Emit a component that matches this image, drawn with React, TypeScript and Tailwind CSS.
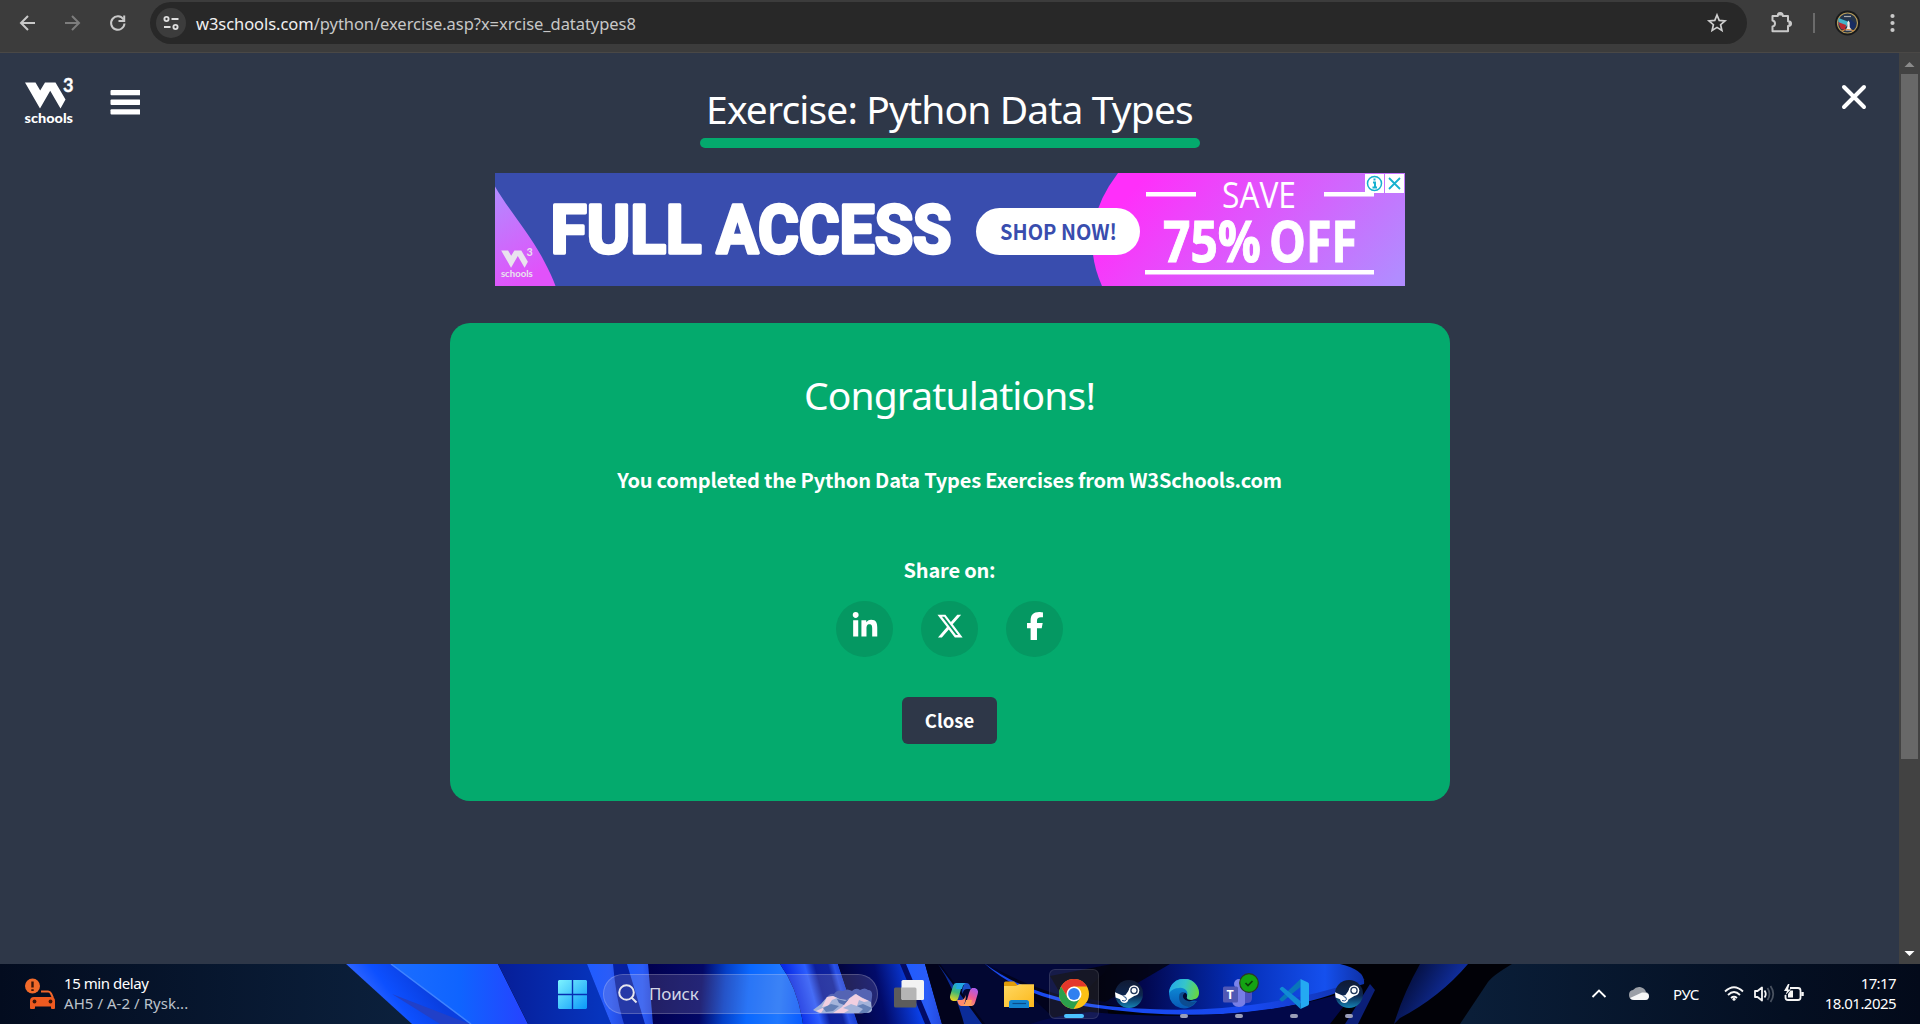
import React from "react";
import { FaLinkedinIn, FaXTwitter, FaFacebookF } from "react-icons/fa6";

function W3Mark({ className, fill = "#fff" }: { className: string; fill?: string }) {
  return (
    <svg className={className} viewBox="0 0 50 48" fill={fill} overflow="visible">
      <path d="M1 5.5H11.5L16.2 13.5L21 5.5H31.5L41.5 22.5L36.5 31.5L26.2 13.8L16 31.5Z" />
      <text x="39" y="14.500" fontFamily="Lato, sans-serif" fontWeight="700" fontSize="18.500" textLength="10.500" lengthAdjust="spacingAndGlyphs" stroke="#fff" strokeWidth="0.400">3</text>
      <text x="0.600" y="46.200" fontFamily="Lato, sans-serif" fontWeight="900" fontSize="13.500" textLength="48.400" lengthAdjust="spacingAndGlyphs">schools</text>
    </svg>
  );
}

function BrowserBar() {
  return (
    <header className="flex h-[53px] shrink-0 items-start border-b border-[#4a4846] bg-[#3c3c3c] pt-0.5">
      <div className="flex h-[42px] w-[150px] shrink-0 items-center">
        <svg className="h-[42px] w-[150px]" viewBox="0 2 150 42" fill="none" strokeWidth="2">
          <path d="M35 23H21.5M28 16L21 23L28 30" stroke="#c9c9c9" />
          <path d="M65 23H78.500M72 16L79 23L72 30" stroke="#7d7d7d" />
          <path d="M123.500 19.500A6.700 6.700 0 1 0 124.500 23.500" stroke="#c9c9c9" />
          <path d="M124.200 15.500V21H118.500" stroke="#c9c9c9" />
        </svg>
      </div>
      <div className="flex h-[42px] w-[1597px] shrink-0 items-center rounded-full bg-[#282828] pr-[19px] pl-1.5">
        <span className="flex size-[30px] items-center justify-center rounded-full bg-[#3c3c3c]">
          <svg className="size-5" viewBox="0 0 20 20" fill="none" stroke="#dedede" strokeWidth="1.900">
            <circle cx="5.500" cy="6" r="2.100" />
            <path d="M10.500 6H17.500M3 14H9.500" />
            <circle cx="14.500" cy="14" r="2.100" />
          </svg>
        </span>
        <span className="ml-2.5 translate-y-px font-['Noto_Sans',sans-serif] text-[16.5px] tracking-[-0.05px] whitespace-nowrap text-[#c7c7c7]">
          <span className="text-[#f0f0f0]">w3schools.com</span>/python/exercise.asp?x=xrcise_datatypes8
        </span>
        <svg className="ml-auto size-[22px]" viewBox="0 0 22 22" fill="none" stroke="#cfcfcf" strokeWidth="1.700">
          <path d="M11 3L13.200 8.400L19 8.900L14.600 12.700L15.900 18.500L11 15.400L6.100 18.500L7.400 12.700L3 8.900L8.800 8.400Z" />
        </svg>
      </div>
      <svg className="h-[42px] w-[173px] shrink-0" viewBox="1747 2 173 42" fill="none">
        <path d="M1772.500 16H1777.800Q1777.800 13 1780.300 13T1782.800 16H1788V21.300Q1791 21.300 1791 23.700T1788 26V31.200H1772.500V26.600Q1775 26.200 1775 23.600T1772.500 20.600Z" stroke="#c9c9c9" strokeWidth="2" strokeLinejoin="round" />
        <path d="M1777.500 15.500Q1777.500 12.500 1780.300 12.500T1783 15.500ZM1788.500 21Q1791.500 21.200 1791.500 23.700T1788.500 26.400Z" fill="#c9c9c9" />
        <path d="M1814 13V33" stroke="#6b6b6b" strokeWidth="2" />
        <circle cx="1847.500" cy="23" r="12.500" fill="#181a1c" />
        <circle cx="1847.500" cy="23" r="10" fill="#25344a" stroke="#b59b5c" strokeWidth="1.200" />
        <path d="M1838.500 18L1849 22L1846 27L1838.500 24Z" fill="#43b2c9" />
        <path d="M1838 22L1846 25L1845 30L1841 29Z" fill="#ba2830" />
        <path d="M1850 19L1856 24L1854 29L1849 28Z" fill="#182c62" />
        <path d="M1844 16.500H1851" stroke="#aaa" strokeWidth="1.200" />
        <path d="M1848.500 20.500L1849.700 22.500V27L1852 30.500H1845.500L1847.300 27V22.500Z" fill="#efe7e5" />
        <path d="M1842 31Q1848 28 1854 31" stroke="#d6873c" strokeWidth="1.200" />
        <g fill="#c9c9c9">
          <circle cx="1892.500" cy="16" r="2.100" />
          <circle cx="1892.500" cy="23" r="2.100" />
          <circle cx="1892.500" cy="30" r="2.100" />
        </g>
      </svg>
    </header>
  );
}

function AdBanner() {
  return (
    <svg className="mt-[25px] h-[113px] w-[910px]" viewBox="0 0 910 113" fill="#fff" overflow="visible">
      <defs>
        <linearGradient id="adLeft" x1="0" y1="0" x2="0.350" y2="1">
          <stop offset="0" stopColor="#b18cff" />
          <stop offset="1" stopColor="#e152fa" />
        </linearGradient>
        <linearGradient id="adRight" gradientUnits="userSpaceOnUse" x1="640" y1="-20" x2="850" y2="165">
          <stop offset="0.080" stopColor="#ff2ffa" />
          <stop offset="1" stopColor="#b18cff" />
        </linearGradient>
      </defs>
      <rect width="910" height="113" fill="#394dae" />
      <path d="M0 13.500C13 36 37 64 49 88Q57 103 60.500 113H0Z" fill="url(#adLeft)" />
      <path d="M623 0Q604 25 599 50Q593 82 607 113H910V0Z" fill="url(#adRight)" />
      <svg x="5.500" y="73" width="33" height="33.500" viewBox="0 0 50 48" fill="#e9e3ee" overflow="visible">
        <path d="M1 5.500H11.500L16.200 13.500L21 5.500H31.500L41.500 22.500L36.500 31.500L26.200 13.800L16 31.500Z" />
        <text x="39.500" y="14.500" fontFamily="Lato, sans-serif" fontWeight="700" fontSize="18.500" textLength="9.500" lengthAdjust="spacingAndGlyphs">3</text>
        <text x="0.600" y="46.200" fontFamily="Lato, sans-serif" fontWeight="700" fontSize="14" textLength="48.400" lengthAdjust="spacingAndGlyphs">schools</text>
      </svg>
      <g fontFamily="Roboto, sans-serif" fontWeight="700" fontSize="67" stroke="#fff" strokeWidth="3.400" strokeLinejoin="round">
        <text x="55.500" y="79.500" textLength="151" lengthAdjust="spacingAndGlyphs">FULL</text>
        <text x="221.500" y="79.500" textLength="235" lengthAdjust="spacingAndGlyphs">ACCESS</text>
      </g>
      <rect x="481" y="35" width="164" height="47" rx="23.500" />
      <text x="505" y="67" fill="#394dae" fontFamily="'Noto Sans CJK SC', sans-serif" fontWeight="700" fontSize="21.500" textLength="117" lengthAdjust="spacingAndGlyphs">SHOP NOW!</text>
      <text x="727" y="34.500" fontFamily="'Open Sans', sans-serif" fontWeight="400" fontSize="37" textLength="74" lengthAdjust="spacingAndGlyphs">SAVE</text>
      <g fontFamily="'Open Sans', sans-serif" fontWeight="700" fontSize="58" stroke="#fff" strokeWidth="1">
        <text x="668" y="88.500" textLength="98" lengthAdjust="spacingAndGlyphs">75%</text>
        <text x="774" y="88.500" textLength="88" lengthAdjust="spacingAndGlyphs">OFF</text>
      </g>
      <path d="M651 19H701V23.500H651ZM829 19H879V23.500H829ZM650 97H879V101.500H650Z" />
      <path d="M870 1H889V20H870ZM890 1H909V20H890Z" />
      <g fill="none" stroke="#16b0cf" strokeWidth="1.500">
        <circle cx="879.500" cy="10.500" r="7" />
        <path d="M894 5L905 16M905 5L894 16" strokeWidth="1.800" />
        <path d="M878 9.500H880V14M877.500 14.500H882M879.500 5.500V7.500" strokeWidth="2" />
      </g>
    </svg>
  );
}

function ShareButton({ children }: { children: React.ReactNode }) {
  return <span className="flex h-14 w-[57px] items-center justify-center rounded-full bg-[#059862] pb-1.5 text-white">{children}</span>;
}

function Page() {
  return (
    <main className="flex h-[911px] shrink-0 bg-[#2e3748]">
      <div className="flex min-w-0 flex-1 flex-col">
        <div className="flex h-[95px] items-start justify-between px-6">
          <div className="flex w-[300px] items-start">
            <W3Mark className="mt-6 h-12 w-[50px]" />
            <svg className="mt-[37px] ml-9 h-[25px] w-[30px]" viewBox="0 0 30 25" fill="#fff">
              <rect x="0.500" width="30" height="5.300" rx="1" />
              <rect x="0.500" y="9.600" width="30" height="5.300" rx="1" />
              <rect x="0.500" y="19.300" width="30" height="5.300" rx="1" />
            </svg>
          </div>
          <div className="flex w-[500px] flex-col items-center">
            <h1 className="mt-7 h-14 font-['Noto_Sans',sans-serif] text-[39px] leading-14 tracking-[-0.87px] whitespace-nowrap text-white">Exercise: Python Data Types</h1>
            <div className="mt-px h-2.5 w-[500px] shrink-0 rounded-[5px] bg-[#04aa6d]" />
          </div>
          <div className="flex w-[300px] justify-end pr-1.5">
            <svg className="mt-[29px] size-[30px]" viewBox="0 0 30 30" stroke="#fff" strokeWidth="4" strokeLinecap="round">
              <path d="M5 5L25 25M25 5L5 25" />
            </svg>
          </div>
        </div>
        <div className="flex flex-col items-center">
          <AdBanner />
          <section className="mt-[37px] flex h-[478px] w-[1000px] flex-col items-center rounded-[20px] bg-[#04aa6d] text-white">
            <h2 className="mt-11 h-14 font-['Noto_Sans',sans-serif] text-[39px] leading-14 tracking-[-0.84px]">Congratulations!</h2>
            <p className="mt-[41px] h-8 font-['Noto_Sans_CJK_SC',sans-serif] text-[20px] leading-8 font-bold tracking-[-0.2px] whitespace-nowrap">You completed the Python Data Types Exercises from W3Schools.com</p>
            <p className="mt-[58px] h-8 font-['Noto_Sans_CJK_SC',sans-serif] text-[20px] leading-8 font-bold tracking-[-0.19px]">Share on:</p>
            <div className="mt-[15px] flex gap-7">
              <ShareButton><FaLinkedinIn className="size-[28px]" /></ShareButton>
              <ShareButton><FaXTwitter className="size-[28px]" /></ShareButton>
              <ShareButton><FaFacebookF className="size-[28px]" /></ShareButton>
            </div>
            <button className="mt-10 h-[47px] w-[95px] rounded-md bg-[#2e3748] font-['Noto_Sans_CJK_SC',sans-serif] text-[18.5px] leading-[47px] font-bold">Close</button>
          </section>
        </div>
      </div>
      <div className="flex w-[21px] shrink-0 flex-col items-center justify-between bg-[#424242]">
        <svg className="h-[21px] w-[21px]" viewBox="0 0 21 21" fill="#8b8b8b"><path d="M5.500 14L10.500 9L15.500 14Z" /></svg>
        <div className="mr-px h-[685px] w-[17px] bg-[#686868]" />
        <div className="flex-1" />
        <svg className="h-[21px] w-[21px]" viewBox="0 0 21 21" fill="#fff"><path d="M5.500 8L10.500 13L15.500 8Z" /></svg>
      </div>
    </main>
  );
}

function Wallpaper() {
  return (
    <svg className="absolute inset-0 h-[60px] w-[1920px]" viewBox="0 0 1920 60" preserveAspectRatio="none">
      <defs>
        <linearGradient id="wpLeft" gradientUnits="userSpaceOnUse" x1="0" y1="0" x2="400" y2="0">
          <stop offset="0" stopColor="#030c1f" /><stop offset="1" stopColor="#0b203c" />
        </linearGradient>
        <linearGradient id="wpRight" gradientUnits="userSpaceOnUse" x1="1470" y1="0" x2="1920" y2="0">
          <stop offset="0" stopColor="#0a1e38" /><stop offset="0.700" stopColor="#040f22" /><stop offset="1" stopColor="#030a1a" />
        </linearGradient>
        <linearGradient id="wpFold" gradientUnits="userSpaceOnUse" x1="370" y1="30" x2="410" y2="0">
          <stop offset="0" stopColor="#2b63ff" /><stop offset="0.350" stopColor="#0d50ff" /><stop offset="1" stopColor="#0a3fe0" />
        </linearGradient>
        <linearGradient id="wpFold2" gradientUnits="userSpaceOnUse" x1="400" y1="20" x2="520" y2="20">
          <stop offset="0" stopColor="#1a6cff" /><stop offset="0.500" stopColor="#0f64ff" /><stop offset="1" stopColor="#2446ff" />
        </linearGradient>
        <linearGradient id="wpDeep" gradientUnits="userSpaceOnUse" x1="500" y1="0" x2="600" y2="0">
          <stop offset="0" stopColor="#061e98" /><stop offset="1" stopColor="#0634bd" />
        </linearGradient>
        <linearGradient id="wpStripe" x1="0" y1="0" x2="1" y2="0">
          <stop offset="0" stopColor="#1f5cff" /><stop offset="0.600" stopColor="#2a5cf8" /><stop offset="1" stopColor="#2348dc" />
        </linearGradient>
        <linearGradient id="wpGlow" gradientUnits="userSpaceOnUse" x1="648" y1="0" x2="805" y2="12">
          <stop offset="0" stopColor="#01004f" /><stop offset="0.350" stopColor="#030866" /><stop offset="0.500" stopColor="#0440c8" />
          <stop offset="0.650" stopColor="#0a68ff" /><stop offset="0.850" stopColor="#1f78ff" /><stop offset="1" stopColor="#0a5cff" />
        </linearGradient>
        <linearGradient id="wpFold3" gradientUnits="userSpaceOnUse" x1="784" y1="0" x2="838" y2="-15">
          <stop offset="0" stopColor="#0a2ce6" /><stop offset="0.350" stopColor="#2c5eff" /><stop offset="0.520" stopColor="#0d1f9c" />
          <stop offset="0.750" stopColor="#0f249f" /><stop offset="0.850" stopColor="#2a52e8" /><stop offset="1" stopColor="#173ccf" />
        </linearGradient>
        <linearGradient id="wpNavy" gradientUnits="userSpaceOnUse" x1="838" y1="0" x2="906" y2="-15">
          <stop offset="0" stopColor="#02043e" /><stop offset="0.500" stopColor="#020b6a" /><stop offset="1" stopColor="#0a40e8" />
        </linearGradient>
        <linearGradient id="wpBowl" gradientUnits="userSpaceOnUse" x1="1070" y1="0" x2="1370" y2="0">
          <stop offset="0" stopColor="#01020c" /><stop offset="0.250" stopColor="#020850" /><stop offset="0.550" stopColor="#042cb4" /><stop offset="0.850" stopColor="#1550ee" /><stop offset="1" stopColor="#0d2c9c" />
        </linearGradient>
        <linearGradient id="wpSwoosh" gradientUnits="userSpaceOnUse" x1="984" y1="0" x2="1370" y2="0">
          <stop offset="0" stopColor="#1a4af0" /><stop offset="0.700" stopColor="#1748ef" /><stop offset="1" stopColor="#102f9e" />
        </linearGradient>
        <linearGradient id="wpBlob" gradientUnits="userSpaceOnUse" x1="1395" y1="0" x2="1455" y2="35">
          <stop offset="0" stopColor="#000318" /><stop offset="1" stopColor="#1233ae" />
        </linearGradient>
      </defs>
      <rect width="1920" height="60" fill="#010107" />
      <path d="M0 0H346L413 60H0Z" fill="url(#wpLeft)" />
      <path d="M346 0H392L471 60H412Z" fill="url(#wpFold)" />
      <path d="M392 30L470 60H440Z" fill="#2140c8" />
      <path d="M391 0H498L528 60H471Z" fill="url(#wpFold2)" />
      <path d="M391 0L471 60" stroke="#3f83ff" strokeWidth="1.500" />
      <path d="M498 0H590L611 60H528Z" fill="url(#wpDeep)" />
      <path d="M587 0H650V60H611Z" fill="#0620a0" />
      <path d="M587 0H613Q616 35 624 60H611Z" fill="url(#wpStripe)" />
      <path d="M648 0H780Q798 25 803 60H653Z" fill="url(#wpGlow)" />
      <path d="M627 0H648L653 60H645Z" fill="url(#wpStripe)" />
      <path d="M780 0H838L858 60H803Q798 25 780 0Z" fill="url(#wpFold3)" />
      <path d="M838 0H905L930 60H858Z" fill="url(#wpNavy)" />
      <path d="M905 0H925L942 60H930Z" fill="url(#wpStripe)" />
      <path d="M900 0H906L931 60H925Z" fill="#030c66" />
      <path d="M925 0H1100L1110 60H942Z" fill="#02031c" />
      <path d="M940 0H990Q1030 30 1060 60H985Z" fill="#020732" />
      <path d="M938 0L982 60H964Q955 25 938 0Z" fill="#0b2c98" />
      <path d="M987 0H1120Q1095 12 1080 36Q1030 25 987 0Z" fill="#03083a" />
      <path d="M1110 0H1340Q1366 6 1364 20Q1250 55 1160 46Q1110 43 1085 36Z" fill="url(#wpBowl)" />
      <path d="M1050 12L1112 0H1170L1105 38L1060 29Z" fill="#04040b" opacity=".8" />
      <path d="M984 -1Q1040 42 1150 45Q1260 50 1365 15Q1340 32 1280 44Q1190 58 1090 43Q1020 33 984 -1Z" fill="url(#wpSwoosh)" />
      <path d="M1030 60Q1060 50 1090 48Q1250 62 1358 24L1330 60Z" fill="#020849" />
      <path d="M1345 60L1370 20L1375 26L1358 60Z" fill="#0b1f78" />
      <path d="M1394 60Q1403 30 1420 0H1468Q1440 33 1400 54Z" fill="url(#wpBlob)" />
      <path d="M1512 0H1920V60H1460L1488 18Q1492 12 1512 0Z" fill="url(#wpRight)" />
    </svg>
  );
}

function Steam() {
  return (
    <svg className="size-7" viewBox="0 0 28 28">
      <defs>
        <linearGradient id="steamBg" x1="0" y1="0" x2="0" y2="1"><stop offset="0" stopColor="#101a33" /><stop offset="0.550" stopColor="#0d2650" /><stop offset="1" stopColor="#1484b5" /></linearGradient>
      </defs>
      <circle cx="14" cy="14" r="14" fill="url(#steamBg)" />
      <path d="M0 12.300L8 15.700L10.500 15L14 10L20 15.500L13.500 19.500Q12.500 23 9.500 23Q6 23 5 19.300L0.600 17.500Z" fill="#fff" />
      <circle cx="19" cy="10.500" r="5.300" fill="#fff" />
      <circle cx="19" cy="10.500" r="3.100" fill="#fff" stroke="#23385c" strokeWidth="1.300" />
      <path d="M7 20.500Q10.500 22 11.300 19.500T8.500 16.500" fill="none" stroke="#23508a" strokeWidth="1" />
    </svg>
  );
}

function Slot({ children, indicator }: { children: React.ReactNode; indicator?: "dot" | "active" }) {
  return (
    <div className={indicator === "active" ? "relative flex h-[50px] w-[50px] items-center justify-center rounded-md border border-white/10 bg-white/8" : "relative flex h-[50px] w-[50px] items-center justify-center"}>
      {children}
      {indicator === "dot" && <span className="absolute bottom-px left-[21px] h-1 w-2 rounded-full bg-[#9a9eb8]" />}
      {indicator === "active" && <span className="absolute bottom-0 left-3.5 h-1 w-5 rounded-full bg-[#4cc2ff]" />}
    </div>
  );
}

function Taskbar() {
  return (
    <footer className="relative h-[60px] shrink-0 overflow-hidden bg-[#030c1f] font-['Noto_Sans',sans-serif] text-white">
      <Wallpaper />
      <div className="relative flex h-[60px] items-center">
        <div className="flex w-[547px] shrink-0 items-center pl-6">
          <svg className="size-8" viewBox="0 0 32 32">
            <circle cx="8.500" cy="8" r="7.500" fill="#f26a2a" />
            <path d="M8.500 3.500V9.500M8.500 11.200V13" stroke="#3b1609" strokeWidth="2.400" />
            <path d="M17 13.500H24Q26 13.500 27 15.500L29 20" fill="none" stroke="#f0662b" strokeWidth="2" />
            <path d="M6 23Q6 19 10 19H27Q31 19 31 23V30Q31 31 30 31H28Q27 31 27 30V28.500H11V30Q11 31 10 31H7Q6 31 6 30Z" fill="#ee5a20" />
            <circle cx="10.500" cy="23.500" r="1.900" fill="#3b1609" /><circle cx="26.500" cy="23.500" r="1.900" fill="#3b1609" />
          </svg>
          <div className="mb-0.5 ml-2 flex flex-col text-[15px] leading-5 whitespace-nowrap">
            <span className="tracking-[-0.45px]">15 min delay</span>
            <span className="tracking-[0.05px] text-[#bcc2cb]">AH5 / A-2 / Rysk...</span>
          </div>
        </div>
        <Slot>
          <svg className="size-[29px]" viewBox="0 0 29 29">
            <defs><linearGradient id="win" x1="0" y1="0" x2="1" y2="1"><stop offset="0" stopColor="#7df3ff" /><stop offset="1" stopColor="#0a98fa" /></linearGradient></defs>
            <path d="M1 0H13.800V13.800H0V1ZM15.200 0H28L29 1V13.800H15.200ZM0 15.200H13.800V29H1L0 28ZM15.200 15.200H29V28L28 29H15.200Z" fill="url(#win)" />
          </svg>
        </Slot>
        <div className="ml-1.5 flex h-10 w-[275px] shrink-0 items-center rounded-full border border-white/20 bg-[#c8b8c8]/17 pr-1 pl-3.5">
          <svg className="size-5" viewBox="0 0 20 20" fill="none" stroke="#e6e6ee" strokeWidth="2"><circle cx="8.500" cy="8.500" r="7.300" /><path d="M13.500 13.500L18.500 18.500" /></svg>
          <span className="ml-[11px] text-[17px] leading-6 tracking-[-0.2px] text-[#d3d6e6]">Поиск</span>
          <svg className="mt-3 ml-auto h-[25px] w-[60px]" viewBox="0 0 60 25">
            <path d="M13 11Q16 5 21 6Q24 1 30 3Q34 0 39 3Q43 -1 47 2Q52 -1 55 2Q60 2 59 9L58 17H13Z" fill="#5464b4" />
            <path d="M0 22L8 16L14 9L20 8L27 11L34 12L42 6L50 10L58 14L59 22Q58 25 54 25H6Z" fill="#a3b3da" />
            <path d="M14 9L20 8L24 10L19 12L15 18L9 19ZM37 10L43 6L49 10L56 13L51 14L46 12L44 18L38 16L30 20L36 22L31 25H20L29 19L33 14ZM3 23L12 19L8 25Z" fill="#f1cfe0" />
            <path d="M10 20L18 16L26 18L20 23L13 24ZM44 18L50 16L59 20L54 25H46L50 21Z" fill="#6480b7" />
            <path d="M24 11L32 13L36 11L31 17L26 15Z" fill="#556fae" />
          </svg>
        </div>
        <div className="ml-[6px] flex gap-[5px]">
          <Slot>
            <svg className="h-7 w-[30px]" viewBox="0 0 30 28">
              <rect y="7.500" width="22.500" height="20" rx="1.500" fill="#5c5c5c" /><rect x="7.500" width="22.500" height="20" rx="1.500" fill="#f3f3f3" /><path d="M7.500 7.500H21Q22.500 7.500 22.500 9V20H9Q7.500 20 7.500 18.500Z" fill="#b5b5b5" />
            </svg>
          </Slot>
          <Slot>
            <svg className="h-[25px] w-7" viewBox="0 0 28 25">
              <defs>
                <linearGradient id="copA" x1="0.500" y1="0" x2="0.200" y2="1"><stop offset="0" stopColor="#1fa5e8" /><stop offset="0.500" stopColor="#3cb878" /><stop offset="1" stopColor="#f2d61c" /></linearGradient>
                <linearGradient id="copB" x1="0.800" y1="0" x2="0.300" y2="1"><stop offset="0" stopColor="#a85bf0" /><stop offset="0.500" stopColor="#ee5a94" /><stop offset="1" stopColor="#ffae58" /></linearGradient>
              </defs>
              <path d="M6 1H16Q12 2 11 7L9 14Q8.200 17.500 6.500 19H3Q-1 18 .3 13L3 4Q4 1 6 1Z" fill="url(#copA)" />
              <path d="M10 1H16.500Q19 1 20 4L21 7H17Q14 7 13 10L12.300 12Q12 6 14 3Z" fill="#1c50c8" />
              <path d="M9 1H16Q13 2 12 7H6Q7 2 9 1Z" fill="#23a8e4" />
              <path d="M22 24H12Q16 23 17 18L19 11Q20 7 22 6H25Q29 7 27.700 12L25 21Q24 24 22 24Z" fill="url(#copB)" />
              <path d="M18 24H11.500Q9 24 8 21L7 18H11Q14 18 15 15L15.700 13Q16 19 14 22Z" fill="#ff8a6b" />
              <path d="M19 24H12Q15 23 16 18H22Q21 23 19 24Z" fill="#ffa45c" />
            </svg>
          </Slot>
          <Slot>
            <svg className="h-[27px] w-[30px]" viewBox="0 0 30 27">
              <defs><linearGradient id="fold" x1="0" y1="0" x2="1" y2="1"><stop offset="0" stopColor="#ffd861" /><stop offset="1" stopColor="#fcb81c" /></linearGradient></defs>
              <path d="M0 8V2Q0 .5 1.500 .5H10L13.500 4H20V8Z" fill="#e09c09" /><path d="M0 5H12L15 3.300H30V26H0Z" fill="url(#fold)" />
              <path d="M5 27V21.500Q5 19 7.500 19H22.500Q25 19 25 21.500V27Z" fill="#1283cf" /><path d="M8.500 22.500H22" stroke="#0a4b88" strokeWidth="1.200" />
            </svg>
          </Slot>
          <Slot indicator="active">
            <svg className="size-[30px]" viewBox="0 0 30 30">
              <circle cx="15" cy="15" r="15" fill="#fbc116" />
              <path d="M2 7.500A15 15 0 0 1 28 7.500H15Q9 8 8.500 18.500Z" fill="#e3372b" />
              <path d="M2 7.500A15 15 0 0 0 14.500 30L21.500 18.500Q14 25 8.500 18.500Z" fill="#2ba04c" />
              <circle cx="15" cy="15" r="7.500" fill="#fff" /><circle cx="15" cy="15" r="5.900" fill="#3080f0" />
            </svg>
          </Slot>
          <Slot><Steam /></Slot>
          <Slot indicator="dot">
            <svg className="size-[30px]" viewBox="0 0 30 30">
              <defs>
                <linearGradient id="edgeA" x1="0" y1="0.300" x2="1" y2="0.500"><stop offset="0" stopColor="#25a9e8" /><stop offset="0.500" stopColor="#35c5cb" /><stop offset="1" stopColor="#65d743" /></linearGradient>
                <linearGradient id="edgeB" x1="0" y1="0" x2="0" y2="1"><stop offset="0" stopColor="#0f9be0" /><stop offset="1" stopColor="#0759b6" /></linearGradient>
              </defs>
              <path d="M30 14A15 15 0 0 0 0 15A15 15 0 0 0 28 22Q24 22 20 20Z" fill="url(#edgeB)" />
              <path d="M0 14C1 5 7 0 15 0C25 0 30 8 30 14C30 19 26 21 22 21C18 21 17 19 18 17C20 12 15 8 10 9Q4 9 0 14Z" fill="url(#edgeA)" />
              <path d="M10.500 15Q8 26 20 28Q25 26 28 22Q22 24 18 21Q16 19.500 17.500 17Q15 10 10.500 15Z" fill="#0c4c91" />
              <path d="M14 16Q13 20 19 22Q24 23 28.500 19Q26 21 22 21Q18 21 17.700 18.500Q19 15 16 13.500Z" fill="#020a35" />
            </svg>
          </Slot>
          <Slot indicator="dot">
            <svg className="-mt-2 ml-1 h-9 w-9" viewBox="0 0 36 36">
              <circle cx="16" cy="12" r="5" fill="#7b83eb" /><path d="M9 15H23V27Q23 35 16 35T9 28Z" fill="#777ee5" /><path d="M22 17H29V26Q29 31 24 31H22Z" fill="#4a51c0" />
              <rect x="0" y="14.500" width="15" height="16" rx="1.500" fill="#5058b5" />
              <text x="3.500" y="27" fill="#fff" fontFamily="'Noto Sans', sans-serif" fontWeight="700" fontSize="12.500">T</text>
              <circle cx="26" cy="11" r="9.300" fill="#14a313" stroke="#2b3b22" strokeWidth="1.200" /><path d="M22.500 11L25 13.500L29.500 9" fill="none" stroke="#0b3e0b" strokeWidth="1.700" />
            </svg>
          </Slot>
          <Slot indicator="dot">
            <svg className="size-[30px]" viewBox="0 0 30 30">
              <path d="M.5 20L21.500 0V8L4 22.200Q3 23 2 22L.5 20.800Z" fill="#0976ba" />
              <path d="M.5 10L2 8.300Q3 7.300 4 8L21.500 22V30Z" fill="#118bd5" />
              <path d="M21.500 0L29 3.500Q30 4 30 5.500V24.500Q30 26 29 26.500L21.500 30Z" fill="#24a9f2" />
            </svg>
          </Slot>
          <Slot indicator="dot"><Steam /></Slot>
        </div>
        <svg className="ml-auto h-[60px] w-[80px]" viewBox="1585 0 80 60">
          <path d="M1592.500 33L1599 26.500L1605.500 33" fill="none" stroke="#fff" strokeWidth="1.900" />
          <path d="M1629 31Q1629 26.500 1633 26Q1636 22.500 1640 23Q1645 24 1646 28Q1649.500 29 1649 32.500Q1648.500 36 1645 36H1634Q1629 36 1629 31Z" fill="#9b9fa6" />
          <path d="M1630 34L1642 28.500Q1649 28 1649 32.500Q1648.500 36 1645 36H1634Q1631.500 36 1630 34Z" fill="#f7f7f7" />
        </svg>
        <span className="ml-2 w-[27px] text-[15px] tracking-[-0.3px]">РУС</span>
        <svg className="ml-[20px] h-[60px] w-[90px]" viewBox="1720 0 90 60" fill="none" stroke="#f5f5f5" strokeWidth="1.800">
          <path d="M1725 27.500Q1734 19 1743 27.500M1728 31Q1734 25 1740 31M1731 34Q1734 31.500 1737 34" />
          <circle cx="1734" cy="35.300" r="1.500" fill="#f5f5f5" stroke="none" />
          <path d="M1755 27H1757.500L1762 23.500V36.500L1757.500 33H1755Z" strokeLinejoin="round" />
          <path d="M1764.500 26.500Q1767 30 1764.500 33.500" />
          <path d="M1767.500 24Q1771.500 30 1767.500 36M1770.500 22Q1776 30 1770.500 38" stroke="#48515f" />
          <path d="M1790 24H1798Q1800.500 24 1800.500 26.500V33.500Q1800.500 36 1798 36H1788Q1785.500 36 1785.500 33.500V31" />
          <path d="M1790.500 26.500H1793V33.500H1788V30Z" fill="#f5f5f5" stroke="none" />
          <path d="M1802.500 28V32" strokeWidth="2.500" />
          <path d="M1788 20L1784 27H1787L1785.500 31L1791 25.500H1788L1789.500 20Z" fill="#f5f5f5" stroke="none" />
        </svg>
        <div className="mr-6 mb-0.5 ml-[13px] flex w-[73px] flex-col items-end text-[15px] leading-5 whitespace-nowrap">
          <span className="tracking-[-0.6px]">17:17</span>
          <span className="tracking-[-0.55px]">18.01.2025</span>
        </div>
      </div>
    </footer>
  );
}

export default function App() {
  return (
    <div className="flex h-[1024px] w-[1920px] flex-col overflow-hidden">
      <BrowserBar />
      <Page />
      <Taskbar />
    </div>
  );
}
